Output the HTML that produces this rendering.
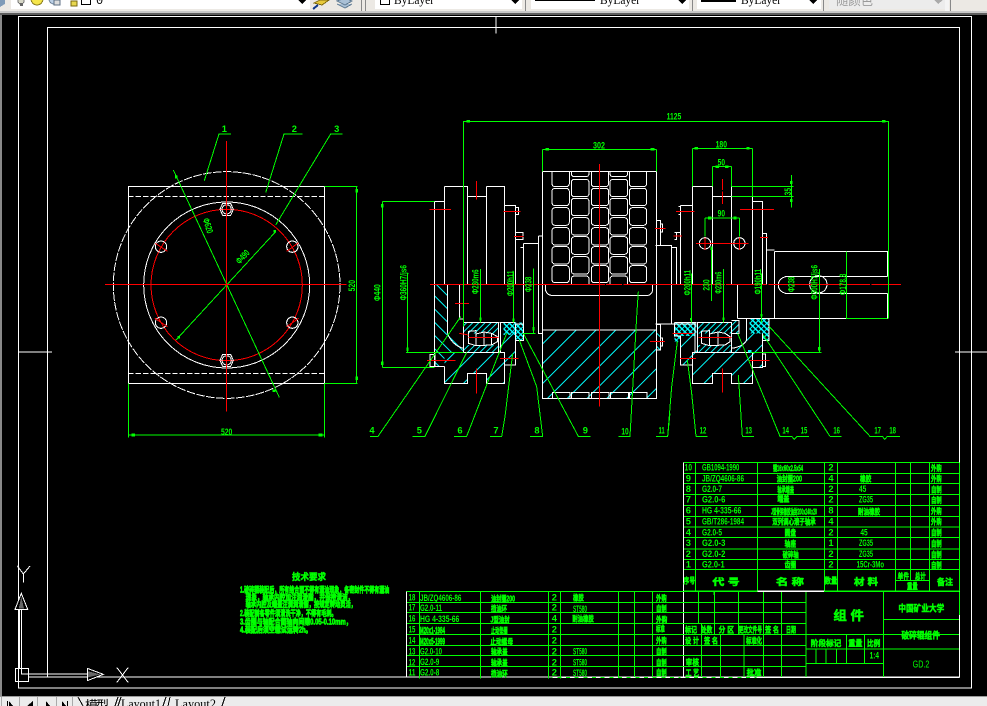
<!DOCTYPE html>
<html><head><meta charset="utf-8"><style>
html,body{margin:0;padding:0;background:#000}
body{width:987px;height:706px;overflow:hidden;position:relative}
svg{position:absolute;left:0;top:0}
text{font-family:"Liberation Sans","Noto Sans CJK SC",sans-serif}
.w{fill:none;stroke:#fff;stroke-width:3}
.g{fill:none;stroke:#0f0;stroke-width:3}
.r{fill:none;stroke:#f00;stroke-width:3}
.t{fill:#0f0;font-weight:bold;font-size:28px}
.c{fill:#0f0;font-weight:bold;font-size:24px;stroke:#0f0;stroke-width:1.5}
.m{text-anchor:middle}
</style></head><body>
<svg width="987" height="706" viewBox="0 0 987 706" shape-rendering="crispEdges">
<defs>
<pattern id="hf" patternUnits="userSpaceOnUse" width="42" height="42" patternTransform="rotate(45)"><rect x="0" y="0" width="3" height="42" fill="#0ff"/></pattern>
<pattern id="hb" patternUnits="userSpaceOnUse" width="28" height="28" patternTransform="rotate(-45)"><rect x="0" y="0" width="3" height="28" fill="#0ff"/></pattern>
<pattern id="hd" patternUnits="userSpaceOnUse" width="13" height="13" patternTransform="rotate(45)"><rect x="0" y="0" width="3" height="13" fill="#0ff"/></pattern>
<pattern id="hx" patternUnits="userSpaceOnUse" width="12" height="12" patternTransform="rotate(-45)"><rect x="0" y="0" width="4" height="12" fill="#0ff"/><rect x="0" y="0" width="12" height="3" fill="#0ff"/></pattern>
<clipPath id="cl"><rect x="517" y="216" width="343" height="337"/></clipPath>
<g id="ca" class="w"><rect x="0" y="180" width="52" height="80" rx="9"/><rect x="0" y="265" width="52" height="52" rx="9"/><rect x="0" y="323" width="52" height="53" rx="9"/><rect x="0" y="383" width="52" height="52" rx="9"/><rect x="0" y="440" width="52" height="52" rx="9"/><rect x="0" y="497" width="52" height="51" rx="9"/></g>
<g id="cb" class="w"><rect x="0" y="170" width="53" height="60" rx="9"/><rect x="0" y="238" width="53" height="52" rx="9"/><rect x="0" y="295" width="53" height="52" rx="9"/><rect x="0" y="353" width="53" height="52" rx="9"/><rect x="0" y="410" width="53" height="53" rx="9"/><rect x="0" y="470" width="53" height="52" rx="9"/><rect x="0" y="528" width="53" height="60" rx="9"/></g>
</defs>

<!-- canvas frames -->
<g transform="scale(.33333)">
<path class="w" d="M55 49H2915V2064H55ZM142 82H2879V2031H142Z"/>
<path class="w" d="M1488 49V100M55 1056H156M2865 1056H2961"/>
</g>

<!-- toolbar -->
<rect x="0" y="0" width="987" height="12" fill="#ece9e4"/>
<rect x="0" y="11" width="987" height="2" fill="#c8c8c8"/>
<rect x="0" y="13" width="987" height="2" fill="#5e5e5e"/>
<rect x="0" y="15" width="2" height="682" fill="#8a8a8a"/>
<rect x="11" y="0" width="299" height="9" fill="#fff"/>
<rect x="375" y="0" width="147" height="9" fill="#fff"/>
<rect x="531" y="0" width="158" height="9" fill="#fff"/>
<rect x="697" y="0" width="124" height="9" fill="#fff"/>
<rect x="829" y="0" width="117" height="9" fill="#ececec"/>
<rect x="945" y="0" width="4" height="11" fill="#f4f4f4"/>
<path d="M361.5 0V11M365.5 0V11M525.5 0V11M692.5 0V11M823.5 0V11M950.5 0V11" stroke="#888" fill="none"/>
<!-- toolbar icons -->
<path d="M0 0H5V4L0 7Z" fill="#7f9bb8"/>
<circle cx="21" cy="1" r="3" fill="#d8d8c8" stroke="#777"/><rect x="20" y="3" width="3" height="3" fill="#666"/>
<circle cx="37" cy="-1" r="6" fill="#f6e64a" stroke="#8a7d20"/>
<circle cx="54" cy="-1" r="5" fill="#bcd0e6" stroke="#6a7f96"/><rect x="54" y="0" width="6" height="5" fill="#ddd" stroke="#5c6f84"/>
<rect x="71" y="1" width="6" height="5" fill="#e8d850" stroke="#7a6a10"/>
<rect x="81.5" y="-2" width="9" height="6.5" fill="#fff" stroke="#000"/>
<text x="96" y="4" font-size="12" style='font-family:"Liberation Mono",monospace'>0</text>
<path d="M298 0H306L302 4Z M511 0H519L515 4Z M678 0H686L682 4Z M809 0H817L813 4Z" fill="#000"/>
<path d="M934 0H943L938 4Z" fill="#aaa"/>
<path d="M314 3L320 0L329 0L322 5Z" fill="#e8c93a" stroke="#7f6a10"/><path d="M313 9L318 5" stroke="#123a8c" stroke-width="2"/>
<path d="M337 1L345 5L352 1L345 -2Z M337 4L345 8L352 4" fill="#a9c0d6" stroke="#5d7890"/>
<rect x="380.5" y="-2" width="9" height="6.5" fill="#fff" stroke="#000"/>
<text x="394" y="4" font-size="13" textLength="40" lengthAdjust="spacingAndGlyphs" style='font-family:"Liberation Serif",serif'>ByLayer</text>
<rect x="535" y="0" width="60" height="1" fill="#000"/>
<text x="600" y="4" font-size="13" textLength="40" lengthAdjust="spacingAndGlyphs" style='font-family:"Liberation Serif",serif'>ByLayer</text>
<rect x="701" y="0" width="35" height="2" fill="#000"/>
<text x="741" y="4" font-size="13" textLength="40" lengthAdjust="spacingAndGlyphs" style='font-family:"Liberation Serif",serif'>ByLayer</text>
<text x="836" y="5" font-size="13" fill="#9a9a9a" textLength="37" lengthAdjust="spacingAndGlyphs">随颜色</text>

<!-- left view: origin 90,110 -->
<g transform="translate(90,110) scale(.33333)">
<circle cx="410" cy="525" r="340" class="w" stroke-dasharray="26 4"/>
<rect x="115" y="229" width="588" height="591" class="w"/>
<path class="w" stroke-dasharray="16 6" d="M115 259H703M115 790H703"/>
<circle cx="410" cy="525" r="249" class="w"/>
<circle cx="410" cy="525" r="227" class="r"/>
<g class="w">
<path d="M398 280H422L430 298L422 316H398L390 298Z"/><path d="M398 733H422L430 751L422 769H398L390 751Z"/>
<circle cx="213" cy="410" r="17"/><circle cx="607" cy="410" r="17"/><circle cx="213" cy="638" r="17"/><circle cx="607" cy="638" r="17"/>
<circle cx="410" cy="298" r="14"/><circle cx="410" cy="751" r="14"/>
</g>
<path class="g" d="M423 72H387L343 212M638 72H582L527 248M758 72H722L557 345M250 180L568 862M557 365L258 690"/>
<path class="g" d="M703 229H802M703 820H802M800 229V820M115 820V983M703 820V983M115 975H703"/>
<path fill="#0f0" d="M796 237h8v10h-8zM796 800h8v10h-8zM124 971h11v8h-11zM686 971h11v8h-11zM255 197l8 0 0 8-8 0zM548 838l8 0 0 8-8 0zM550 360l8 0 0 8-8 0zM262 678l8 0 0 8-8 0z"/>
<path class="r" d="M45 523H770M410 93V905M196 400L232 424M590 424L626 398M195 625L232 650M590 650L626 625"/>
<text class="t m" x="403" y="66">1</text>
<text class="t m" x="613" y="66">2</text>
<text class="t m" x="740" y="66">3</text>
<text class="t m" x="410" y="975" textLength="34" lengthAdjust="spacingAndGlyphs">520</text>
<text class="t m" transform="translate(795,527) rotate(-90)" textLength="34" lengthAdjust="spacingAndGlyphs">520</text>
<text class="t m" transform="translate(345,350) rotate(72)" textLength="46" lengthAdjust="spacingAndGlyphs">Φ620</text>
<text class="t m" transform="translate(465,447) rotate(-47)" textLength="46" lengthAdjust="spacingAndGlyphs">Φ490</text>
</g>

<!-- centre view: origin 370,100 -->
<g transform="translate(370,100) scale(.33333)">
<path fill="url(#hb)" d="M193 553H233V700L280 745V757H223V800H193Z"/>
<path fill="url(#hf)" d="M223 757H404V851H349V820H293V851H223Z"/>
<path fill="url(#hd)" d="M280 668H385V700H280ZM280 735H385V757H280Z"/>
<path fill="url(#hf)" d="M388 700L437 690V795H404V757H388Z"/>
<path fill="url(#hx)" d="M400 668H460V722H437V705H400Z"/>
<path fill="url(#hf)" d="M517 690H860V895H517Z"/>
<path fill="url(#hb)" d="M860 673H872V750H860Z"/>
<g class="w">
<path d="M223 304H193V800H223M223 259H293V553M223 259V553M293 289H349M349 259H404V553M349 259V553M404 316H437V553M437 322H445V344H437M437 397H459V418H437M452 442H460M460 430H505M505 408H517M505 408V700H517M460 430V680"/>
<path d="M517 214H860V895H517ZM860 361H872V436H860M872 372H878V396H872M860 436H900M860 672H900M860 673H872V750H860M872 714H878V738H872"/>
<path d="M527 553V572Q532 587 552 587H828Q844 587 848 572V553"/>
<path d="M517 690H860M547 895V877H600V895M604 895V877H657V895M664 895V877H717V895M721 895V877H775V895M778 895V877H831V895"/>
<path d="M233 553V700Q245 735 280 745M268 553V657H280M280 553V668"/>
<path d="M223 757H404V851H349V820H293V851H223V800M180 763H195V800H180V763Z"/>
<path d="M280 668H385V757H280ZM385 668V757M392 668V757M388 668H437M404 757V795H437V700"/>
<path d="M295 694L318 692V702L342 696L365 700L382 710V725L365 735L318 737L295 730ZM318 702V735M342 698V735M365 702V735"/>
<path d="M437 672H460V722H437Z"/>
</g>
<g clip-path="url(#cl)">
<use href="#ca" x="546"/><use href="#cb" x="604"/><use href="#ca" x="664"/><use href="#cb" x="720"/><use href="#ca" x="778"/>
</g>
<path class="r" d="M180 553H705M708 553H756M760 553H900M688 192V920M320 243V298M320 805V880M178 328H243M255 610H297M400 334H452M432 409H460M856 385H885M846 724H885M171 781H257M390 775H445M268 700L295 705M295 712H385"/>
<g class="g">
<path d="M900 64H280V680M517 148H860M517 148V214M860 148V214M193 304H37M193 802H37M37 304V802M108 757H280M112 520V757M331 507V668M431 515V668M490 505V700M457 700H497"/>
<path d="M0 1009H24L272 650M127 1009H165L290 757M252 1009H290L410 700M360 1009H395L405 950L428 760M480 1009H518L500 860L448 720M625 1009H662L625 1009L460 700M745 1009H780L785 920L800 650L805 574M858 1009H893L900 940"/>
</g>
<path fill="#0f0" d="M290 60h10v8h-10zM526 144h11v8h-11zM842 144h11v8h-11zM33 312h8v10h-8zM33 785h8v10h-8zM110 743h6v10h-6zM328 652h6v10h-6zM428 655h6v10h-6zM487 681h7v10h-7z"/>
<text class="t m" x="687" y="146" textLength="36" lengthAdjust="spacingAndGlyphs">302</text>
<text class="t m" transform="translate(32,578) rotate(-90)" textLength="50" lengthAdjust="spacingAndGlyphs">Φ440</text>
<text class="t m" transform="translate(110,548) rotate(-90)" textLength="106" lengthAdjust="spacingAndGlyphs">Φ360H7/js6</text>
<text class="t m" transform="translate(325,545) rotate(-90)" textLength="74" lengthAdjust="spacingAndGlyphs">Φ230m6</text>
<text class="t m" transform="translate(430,550) rotate(-90)" textLength="76" lengthAdjust="spacingAndGlyphs">Φ200h11</text>
<text class="t m" transform="translate(484,553) rotate(-90)" textLength="46" lengthAdjust="spacingAndGlyphs">Φ238</text>
<text class="t m" x="6" y="1001">4</text>
<text class="t m" x="148" y="1001">5</text>
<text class="t m" x="270" y="1001">6</text>
<text class="t m" x="378" y="1001">7</text>
<text class="t m" x="501" y="1001">8</text>
<text class="t m" x="646" y="1001">9</text>
<text class="t m" x="765" y="1003" textLength="22" lengthAdjust="spacingAndGlyphs">10</text>
</g>

<!-- right view: origin 650,100 -->
<g transform="translate(650,100) scale(.33333)">
<path fill="url(#hf)" d="M127 757H308V851H245V820H187V851H127Z"/>
<path fill="url(#hd)" d="M142 668H245V700H142ZM142 735H245V757H142Z"/>
<path fill="url(#hf)" d="M91 700H142V757H127V795H91Z"/>
<path fill="url(#hf)" d="M290 700L338 700V803H308V757H245V745L290 720Z"/>
<path fill="url(#hx)" d="M73 668H140V708H92V725H73ZM298 655H357V722H338V700H298Z"/>
<path fill="url(#hd)" d="M245 662H267V700H245Z"/>
<g class="w">
<path d="M16 436H65V672M16 672H140M65 442H80V553M80 397H91M91 316V553M91 316H127M85 320H91V344H85M73 397H80V418H73M127 259H187M187 200V553M127 259V553M187 289H245M245 200V553M245 259H308M308 289V553M308 304H338V553M338 400H350V553M350 450H373M373 454H713V529M373 454V655M262 655H713V581M262 553V655"/>
<path d="M410 529H713M410 581H713M410 529Q385 535 385 555Q385 575 410 581"/>
<circle cx="505" cy="553" r="26"/><circle cx="165" cy="430" r="17"/><circle cx="268" cy="430" r="17"/>
<path d="M127 757H308V851H245V820H187V851H127Z"/>
<path d="M142 668H245V757H142ZM135 668V757M73 668H140M73 668V708H92V795H127V757M290 657V720Q280 740 245 745M338 700V803H308M338 762H347V800H338M245 662H267V700H245M298 655H357V722H338"/>
<path d="M155 694L178 692V702L204 696L225 700L240 710V725L225 735L178 737L155 730ZM178 702V735M204 698V735"/>
</g>
<path class="r" d="M0 553H225M228 553H350M355 553H660M664 553H753M217 237V270M217 274V312M270 328H372M138 430H190M190 430H245M245 430H295M165 412V450M268 412V450M67 700H130M145 712H245M90 775H138M298 781H358M330 412H354M70 408H96M78 334H134M217 805V878M0 724H44M15 385H46"/>
<g class="g">
<path d="M0 64H715V655M127 145H308M127 145V259M308 145V289M187 200H245M187 200V259M245 200V259M245 259H430M245 289H430M424 225V323M165 354H268M165 354V410M268 354V410M185 440V603M220 507V668M124 520V668M334 520V668M300 757H515M508 507V757M589 455V655H713"/>
<path d="M18 1009H53L65 860L82 725M138 1009H173M138 1009L125 880L112 780M277 1009H312M277 1009L265 825M477 1009H441L433 1018L425 1009H390L263 700M540 1009H575M540 1009L340 705M750 1009H712L704 1018L697 1009H660L358 680"/>
</g>
<path fill="#0f0" d="M696 60h11v8h-11zM134 141h10v8h-10zM289 141h10v8h-10zM197 196h10v8h-10zM225 196h10v8h-10zM420 243h8v9h-8zM420 297h8v9h-8zM174 350h10v8h-10zM250 350h10v8h-10zM182 440h6v10h-6zM504 741h8v10h-8zM217 652h6v8h-6zM120 654h6v8h-6zM331 642h6v8h-6z"/>
<path fill="#0ff" d="M294 750h10v8h-10z"/>
<text class="t m" x="72" y="59" textLength="44" lengthAdjust="spacingAndGlyphs">1125</text>
<text class="t m" x="214" y="143" textLength="34" lengthAdjust="spacingAndGlyphs">180</text>
<text class="t m" x="214" y="196" textLength="22" lengthAdjust="spacingAndGlyphs">50</text>
<text class="t m" x="214" y="349" textLength="22" lengthAdjust="spacingAndGlyphs">90</text>
<text class="t m" transform="translate(423,275) rotate(-90)" textLength="22" lengthAdjust="spacingAndGlyphs">35</text>
<text class="t m" transform="translate(178,555) rotate(-90)" textLength="34" lengthAdjust="spacingAndGlyphs">230</text>
<text class="t m" transform="translate(214,548) rotate(-90)" textLength="66" lengthAdjust="spacingAndGlyphs">Φ230m6</text>
<text class="t m" transform="translate(122,548) rotate(-90)" textLength="76" lengthAdjust="spacingAndGlyphs">Φ200h11</text>
<text class="t m" transform="translate(333,545) rotate(-90)" textLength="76" lengthAdjust="spacingAndGlyphs">Φ190h11</text>
<text class="t m" transform="translate(434,553) rotate(-90)" textLength="46" lengthAdjust="spacingAndGlyphs">Φ238</text>
<text class="t m" transform="translate(503,547) rotate(-90)" textLength="104" lengthAdjust="spacingAndGlyphs">Φ300H7/js6</text>
<text class="t m" transform="translate(588,553) rotate(-90)" textLength="64" lengthAdjust="spacingAndGlyphs">Φ178.8</text>
<text class="t m" x="35" y="1001" textLength="18" lengthAdjust="spacingAndGlyphs">11</text>
<text class="t m" x="159" y="1001" textLength="20" lengthAdjust="spacingAndGlyphs">12</text>
<text class="t m" x="296" y="1001" textLength="20" lengthAdjust="spacingAndGlyphs">13</text>
<text class="t m" x="407" y="1001" textLength="20" lengthAdjust="spacingAndGlyphs">14</text>
<text class="t m" x="462" y="1001" textLength="20" lengthAdjust="spacingAndGlyphs">15</text>
<text class="t m" x="560" y="1001" textLength="20" lengthAdjust="spacingAndGlyphs">16</text>
<text class="t m" x="683" y="1001" textLength="20" lengthAdjust="spacingAndGlyphs">17</text>
<text class="t m" x="728" y="1001" textLength="20" lengthAdjust="spacingAndGlyphs">18</text>
</g>

<!-- upper parts list: origin 670,455 -->
<g transform="translate(670,455) scale(.33333)">
<path class="g" d="M40 22H868M40 55H868M40 86H868M40 118H868M40 151H868M40 184H868M40 216H868M40 248H868M40 282H868M40 314H868M40 344H868M40 408H868M76 22V408M262 22V408M463 22V408M502 22V408M676 22V408M721 22V376M778 22V408M868 22V408M676 376H778"/>
<path class="g" d="M85 408V420M132 408V420M205 408V420M280 408V420M334 408V420M408 408V420M640 408V420"/>
<path class="w" d="M40 22V420M868 0V22M262 408H463"/>
<g class="t" style="text-anchor:middle">
<text x="55" y="47" textLength="22" lengthAdjust="spacingAndGlyphs">10</text><text x="55" y="79">9</text><text x="55" y="111">8</text><text x="55" y="143">7</text><text x="55" y="176">6</text><text x="55" y="209">5</text><text x="55" y="241">4</text><text x="55" y="273">3</text><text x="55" y="306">2</text><text x="55" y="338">1</text>
<text x="483" y="47">2</text><text x="483" y="79">4</text><text x="483" y="111">2</text><text x="483" y="143">2</text><text x="483" y="176">8</text><text x="483" y="209">4</text><text x="483" y="241">2</text><text x="483" y="273">1</text><text x="483" y="306">2</text><text x="483" y="338">2</text>
<text x="578" y="111" textLength="22" lengthAdjust="spacingAndGlyphs">45</text><text x="588" y="143" textLength="42" lengthAdjust="spacingAndGlyphs">ZG35</text><text x="582" y="241" textLength="22" lengthAdjust="spacingAndGlyphs">45</text><text x="588" y="273" textLength="42" lengthAdjust="spacingAndGlyphs">ZG35</text><text x="588" y="306" textLength="42" lengthAdjust="spacingAndGlyphs">ZG35</text><text x="601" y="338" textLength="82" lengthAdjust="spacingAndGlyphs">15Cr-3Mo</text>
</g>
<g class="t">
<text x="96" y="46" textLength="112" lengthAdjust="spacingAndGlyphs">GB1094-1990</text>
<text x="96" y="79" textLength="126" lengthAdjust="spacingAndGlyphs">JB/ZQ4606-86</text>
<text x="96" y="111" textLength="60" lengthAdjust="spacingAndGlyphs">G2.0-7</text>
<text x="96" y="143" textLength="70" lengthAdjust="spacingAndGlyphs">G2.0-6</text>
<text x="96" y="175" textLength="118" lengthAdjust="spacingAndGlyphs">HG 4-335-66</text>
<text x="96" y="209" textLength="126" lengthAdjust="spacingAndGlyphs">GB/T286-1984</text>
<text x="96" y="241" textLength="60" lengthAdjust="spacingAndGlyphs">G2.0-5</text>
<text x="96" y="273" textLength="70" lengthAdjust="spacingAndGlyphs">G2.0-3</text>
<text x="96" y="306" textLength="70" lengthAdjust="spacingAndGlyphs">G2.0-2</text>
<text x="96" y="338" textLength="68" lengthAdjust="spacingAndGlyphs">G2.0-1</text>
</g>
<g class="c" style="text-anchor:middle;font-size:24px">
<text x="354" y="48" textLength="90" lengthAdjust="spacingAndGlyphs">键16x60x2.5x54</text>
<text x="358" y="80" textLength="76" lengthAdjust="spacingAndGlyphs">油封圈200</text>
<text x="347" y="112" textLength="50" lengthAdjust="spacingAndGlyphs">轴承端盖</text>
<text x="340" y="140" textLength="36" lengthAdjust="spacingAndGlyphs">端盖</text>
<text x="372" y="179" textLength="138" lengthAdjust="spacingAndGlyphs">J型骨架橡胶油封200x240x20</text>
<text x="372" y="209" textLength="130" lengthAdjust="spacingAndGlyphs">双列调心滚子轴承</text>
<text x="361" y="242" textLength="34" lengthAdjust="spacingAndGlyphs">圆盘</text>
<text x="361" y="274" textLength="34" lengthAdjust="spacingAndGlyphs">轴座</text>
<text x="362" y="308" textLength="48" lengthAdjust="spacingAndGlyphs">破碎轴</text>
<text x="361" y="338" textLength="34" lengthAdjust="spacingAndGlyphs">齿圈</text>
<text x="587" y="80" textLength="34" lengthAdjust="spacingAndGlyphs">橡胶</text>
<text x="597" y="178" textLength="66" lengthAdjust="spacingAndGlyphs">耐油橡胶</text>
<text x="799" y="48" textLength="32" lengthAdjust="spacingAndGlyphs">外购</text><text x="799" y="80" textLength="32" lengthAdjust="spacingAndGlyphs">外购</text><text x="799" y="112" textLength="32" lengthAdjust="spacingAndGlyphs">自制</text><text x="799" y="144" textLength="32" lengthAdjust="spacingAndGlyphs">自制</text><text x="799" y="177" textLength="32" lengthAdjust="spacingAndGlyphs">外购</text><text x="799" y="209" textLength="32" lengthAdjust="spacingAndGlyphs">外购</text><text x="799" y="242" textLength="32" lengthAdjust="spacingAndGlyphs">自制</text><text x="799" y="274" textLength="32" lengthAdjust="spacingAndGlyphs">自制</text><text x="799" y="307" textLength="32" lengthAdjust="spacingAndGlyphs">自制</text><text x="799" y="339" textLength="32" lengthAdjust="spacingAndGlyphs">自制</text>
<text x="58" y="386" textLength="34" lengthAdjust="spacingAndGlyphs">序号</text>
<text x="168" y="390" textLength="82" lengthAdjust="spacingAndGlyphs" style="font-size:28px">代 号</text>
<text x="360" y="390" textLength="84" lengthAdjust="spacingAndGlyphs" style="font-size:28px">名 称</text>
<text x="483" y="385" textLength="38" lengthAdjust="spacingAndGlyphs">数量</text>
<text x="588" y="390" textLength="72" lengthAdjust="spacingAndGlyphs" style="font-size:28px">材 料</text>
<text x="700" y="372" textLength="34" lengthAdjust="spacingAndGlyphs">单件</text>
<text x="751" y="372" textLength="32" lengthAdjust="spacingAndGlyphs">总计</text>
<text x="727" y="402" textLength="32" lengthAdjust="spacingAndGlyphs">重量</text>
<text x="825" y="390" textLength="48" lengthAdjust="spacingAndGlyphs" style="font-size:26px">备注</text>
</g>
</g>

<!-- lower parts list: origin 400,585 -->
<g transform="translate(400,585) scale(.33333)">
<path class="g" d="M19 19H850M19 52H850M19 82H850M19 115H850M19 148H850M19 181H850M19 211H850M19 244H850M58 19V280M241 19V280M445 19V280M481 19V280M655 19V277M703 19V277M757 19V277"/>
<path class="w" d="M19 19V277M850 0V277"/>
<path stroke="#0f0" stroke-width="3" fill="none" d="M455 277H850"/>
<path stroke="#fff" stroke-width="3" stroke-dasharray="14 12" fill="none" d="M458 277H850"/>
<g class="t" style="text-anchor:middle">
<text x="36" y="47" textLength="20" lengthAdjust="spacingAndGlyphs">18</text><text x="36" y="77" textLength="20" lengthAdjust="spacingAndGlyphs">17</text><text x="36" y="110" textLength="20" lengthAdjust="spacingAndGlyphs">16</text><text x="36" y="143" textLength="20" lengthAdjust="spacingAndGlyphs">15</text><text x="36" y="176" textLength="20" lengthAdjust="spacingAndGlyphs">14</text><text x="36" y="208" textLength="20" lengthAdjust="spacingAndGlyphs">13</text><text x="36" y="241" textLength="20" lengthAdjust="spacingAndGlyphs">12</text><text x="36" y="272" textLength="20" lengthAdjust="spacingAndGlyphs">11</text>
<text x="463" y="47">2</text><text x="463" y="77">2</text><text x="463" y="110">4</text><text x="463" y="143">2</text><text x="463" y="176">2</text><text x="463" y="208">2</text><text x="463" y="241">2</text><text x="463" y="272">2</text>
<text x="540" y="81" textLength="42" lengthAdjust="spacingAndGlyphs">ST580</text><text x="540" y="208" textLength="42" lengthAdjust="spacingAndGlyphs">ST580</text><text x="540" y="241" textLength="42" lengthAdjust="spacingAndGlyphs">ST580</text><text x="540" y="273" textLength="42" lengthAdjust="spacingAndGlyphs">ST580</text>
</g>
<g class="t">
<text x="60" y="48" textLength="124" lengthAdjust="spacingAndGlyphs">JB/ZQ4606-86</text>
<text x="60" y="78" textLength="66" lengthAdjust="spacingAndGlyphs">G2.0-11</text>
<text x="60" y="111" textLength="118" lengthAdjust="spacingAndGlyphs">HG 4-335-66</text>
<text x="60" y="145" textLength="75" lengthAdjust="spacingAndGlyphs" style="stroke:#0f0;stroke-width:2">M20x1-1984</text>
<text x="60" y="178" textLength="75" lengthAdjust="spacingAndGlyphs" style="stroke:#0f0;stroke-width:2">M20x5-1999</text>
<text x="60" y="208" textLength="66" lengthAdjust="spacingAndGlyphs">G2.0-10</text>
<text x="60" y="240" textLength="58" lengthAdjust="spacingAndGlyphs">G2.0-9</text>
<text x="60" y="272" textLength="58" lengthAdjust="spacingAndGlyphs">G2.0-8</text>
</g>
<g class="c" style="font-size:24px">
<text x="273" y="50" textLength="72" lengthAdjust="spacingAndGlyphs">油封圈200</text>
<text x="273" y="79" textLength="48" lengthAdjust="spacingAndGlyphs">挡油环</text>
<text x="271" y="112" textLength="58" lengthAdjust="spacingAndGlyphs">J型油封</text>
<text x="273" y="145" textLength="50" lengthAdjust="spacingAndGlyphs">止动垫圈</text>
<text x="271" y="178" textLength="68" lengthAdjust="spacingAndGlyphs">止动螺母</text>
<text x="273" y="209" textLength="50" lengthAdjust="spacingAndGlyphs">轴承盖</text>
<text x="273" y="242" textLength="50" lengthAdjust="spacingAndGlyphs">轴承盖</text>
<text x="273" y="275" textLength="50" lengthAdjust="spacingAndGlyphs">挡油环</text>
<text x="519" y="47" textLength="32" lengthAdjust="spacingAndGlyphs">橡胶</text>
<text x="517" y="110" textLength="64" lengthAdjust="spacingAndGlyphs">耐油橡胶</text>
<text x="768" y="48" textLength="32" lengthAdjust="spacingAndGlyphs">外购</text>
<text x="768" y="80" textLength="32" lengthAdjust="spacingAndGlyphs">自制</text>
<text x="768" y="112" textLength="34" lengthAdjust="spacingAndGlyphs">外购</text>
<text x="768" y="140" textLength="26" lengthAdjust="spacingAndGlyphs">标准</text>
<text x="768" y="176" textLength="32" lengthAdjust="spacingAndGlyphs">外购</text>
<text x="768" y="208" textLength="32" lengthAdjust="spacingAndGlyphs">自制</text>
<text x="768" y="241" textLength="32" lengthAdjust="spacingAndGlyphs">自制</text>
<text x="768" y="272" textLength="32" lengthAdjust="spacingAndGlyphs">自制</text>
</g>
</g>

<!-- title block: origin 680,585 -->
<g transform="translate(680,585) scale(.33333)">
<path class="g" d="M0 19H838M0 52H378M0 82H378M0 115H378M0 148H838M0 181H378M0 211H378M0 244H378M55 19V115M103 19V115M175 19V115M250 19V277M304 19V277M378 19V277M610 19V277M64 115V277M121 148V277M103 115V148M175 115V148M192 148V277M378 192H838M378 235H610M610 103H838M408 192V235M438 192V235M469 192V235M499 148V235M553 148V235M838 19V90"/>
<path class="w" d="M232 19H432M838 90V277M230 277H838"/>
<path stroke="#0f0" stroke-width="3" fill="none" d="M0 277H230"/>
<path stroke="#fff" stroke-width="3" stroke-dasharray="14 12" fill="none" d="M2 277H230"/>
<g class="c" style="font-size:24px">
<text x="15" y="143" textLength="36" lengthAdjust="spacingAndGlyphs">标记</text>
<text x="63" y="143" textLength="34" lengthAdjust="spacingAndGlyphs">处数</text>
<text x="116" y="143" textLength="46" lengthAdjust="spacingAndGlyphs">分 区</text>
<text x="176" y="143" textLength="70" lengthAdjust="spacingAndGlyphs">更改文件号</text>
<text x="255" y="143" textLength="42" lengthAdjust="spacingAndGlyphs">签 名</text>
<text x="318" y="143" textLength="30" lengthAdjust="spacingAndGlyphs">日期</text>
<text x="15" y="175" textLength="42" lengthAdjust="spacingAndGlyphs">设 计</text>
<text x="72" y="175" textLength="42" lengthAdjust="spacingAndGlyphs">签 名</text>
<text x="198" y="175" textLength="48" lengthAdjust="spacingAndGlyphs">标准化</text>
<text x="17" y="240" textLength="40" lengthAdjust="spacingAndGlyphs">审核</text>
<text x="17" y="272" textLength="40" lengthAdjust="spacingAndGlyphs">工 艺</text>
<text x="200" y="272" textLength="44" lengthAdjust="spacingAndGlyphs">批准</text>
<text x="392" y="183" textLength="92" lengthAdjust="spacingAndGlyphs">阶段标记</text>
<text x="505" y="183" textLength="42" lengthAdjust="spacingAndGlyphs">重量</text>
<text x="561" y="183" textLength="40" lengthAdjust="spacingAndGlyphs">比例</text>
<text x="460" y="105" textLength="92" lengthAdjust="spacingAndGlyphs" style="font-size:38px">组 件</text>
<text x="655" y="79" textLength="138" lengthAdjust="spacingAndGlyphs" style="font-size:27px">中国矿业大学</text>
<text x="664" y="160" textLength="116" lengthAdjust="spacingAndGlyphs" style="font-size:27px">破碎辊组件</text>
</g>
<text x="569" y="221" class="t" textLength="28" lengthAdjust="spacingAndGlyphs">1:4</text>
<text x="698" y="247" fill="#0f0" font-size="30" textLength="50" lengthAdjust="spacingAndGlyphs">GD.2</text>
</g>

<!-- technical requirements: origin 0,550 -->
<g transform="translate(0,550) scale(.33333)">
<text x="876" y="90" class="c" style="font-size:27px" textLength="102" lengthAdjust="spacingAndGlyphs">技术要求</text>
<g class="c" style="font-size:24px;stroke-width:2.2">
<text x="720" y="128" textLength="448" lengthAdjust="spacingAndGlyphs">1.破碎辊装配后，所有结合面不得有漏油现象，各密封件不得有漏油</text>
<text x="737" y="150" textLength="323" lengthAdjust="spacingAndGlyphs">现象，轴承内腔加注润滑脂，并保持清洁，</text>
<text x="737" y="171" textLength="331" lengthAdjust="spacingAndGlyphs">轴承内腔及端盖注满润滑脂，按规定转动灵活，</text>
<text x="720" y="198" textLength="290" lengthAdjust="spacingAndGlyphs">2.装配前各零件须清洗干净，不得有毛刺。</text>
<text x="720" y="224" textLength="335" lengthAdjust="spacingAndGlyphs">3.齿圈与轴配合面轴向间隙0.05-0.10mm，</text>
<text x="720" y="248" textLength="215" lengthAdjust="spacingAndGlyphs">4.装配后须空载试运转2h。</text>
</g>
<!-- UCS icon -->
<path class="w" d="M58 180V355M65 180V372H262M86 381H262M46 355H86V395H46Z"/>
<path d="M45 178H83L64 130Z" fill="#000" stroke="#fff" stroke-width="3"/>
<path d="M56 176H72L64 140Z" fill="#666"/>
<path d="M262 355V392L310 373Z" fill="#000" stroke="#fff" stroke-width="3"/>
<path d="M264 364V382L302 373Z" fill="#666"/>
<path class="w" d="M52 48L70 72L90 48M70 72V98M350 352L385 398M385 352L350 398"/>
</g>

<!-- tabs -->
<rect x="0" y="697" width="987" height="9" fill="#ececec"/>
<rect x="0" y="696" width="987" height="1" fill="#9a9a9a"/>
<g fill="#000">
<path d="M1.5 697V706M19.5 697V706M37.5 697V706M56.5 697V706M72.5 697V706" stroke="#aaa"/>
<rect x="7" y="701" width="1" height="5"/><path d="M9 706V701L13 706ZM33 701L27 706H33ZM46 701L50 706H46ZM62 701L66 706H62Z"/><rect x="67" y="701" width="1" height="5"/>
</g>
<path d="M78 697L83 706M115 706L118 697M118 706L121 697M166 697L163 706M170 697L168 706M222 706L225 697" stroke="#000" fill="none"/>
<text x="85" y="710" font-size="13" fill="#000" textLength="24">模型</text>
<text x="121" y="708" font-size="13" fill="#000" textLength="40" lengthAdjust="spacingAndGlyphs" style='font-family:"Liberation Serif",serif'>Layout1</text>
<text x="175" y="708" font-size="13" fill="#000" textLength="41" lengthAdjust="spacingAndGlyphs" style='font-family:"Liberation Serif",serif'>Layout2</text>
</svg>
</body></html>
